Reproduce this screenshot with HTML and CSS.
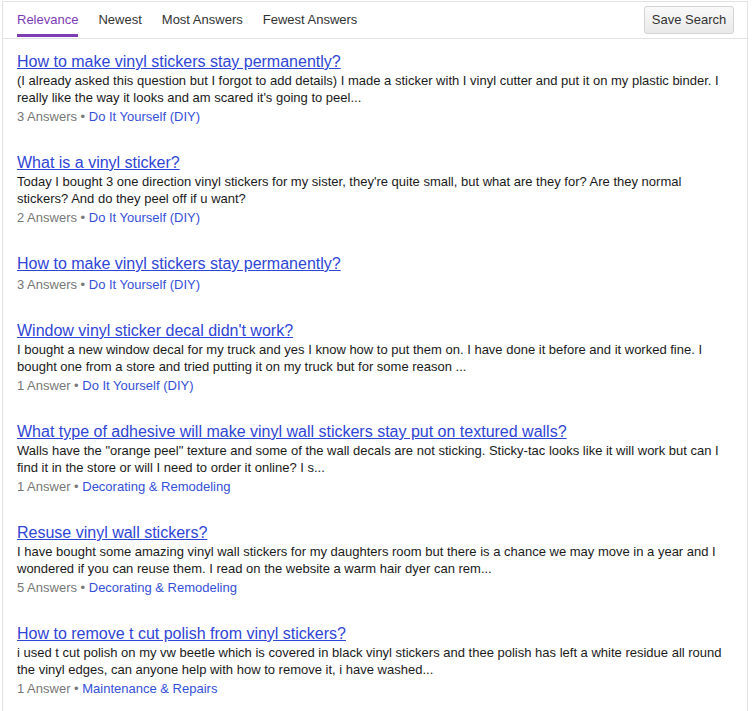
FILE: index.html
```html
<!DOCTYPE html>
<html>
<head>
<meta charset="utf-8">
<link rel="stylesheet" href="styles.css">
</head>
<body>
<div class="panel">
  <div class="header">
    <nav class="tabs">
      <a class="tab active">Relevance</a>
      <a class="tab">Newest</a>
      <a class="tab">Most Answers</a>
      <a class="tab">Fewest Answers</a>
    </nav>
    <button class="save">Save Search</button>
  </div>
  <ul class="results">
    <li class="item">
      <a class="title" href="#">How to make vinyl stickers stay permanently?</a>
      <p class="desc">(I already asked this question but I forgot to add details) I made a sticker with I vinyl cutter and put it on my plastic binder. I really like the way it looks and am scared it's going to peel...</p>
      <p class="meta">3 Answers • <a href="#">Do It Yourself (DIY)</a></p>
    </li>
    <li class="item">
      <a class="title" href="#">What is a vinyl sticker?</a>
      <p class="desc">Today I bought 3 one direction vinyl stickers for my sister, they're quite small, but what are they for? Are they normal stickers? And do they peel off if u want?</p>
      <p class="meta">2 Answers • <a href="#">Do It Yourself (DIY)</a></p>
    </li>
    <li class="item">
      <a class="title" href="#">How to make vinyl stickers stay permanently?</a>
      <p class="meta">3 Answers • <a href="#">Do It Yourself (DIY)</a></p>
    </li>
    <li class="item">
      <a class="title" href="#">Window vinyl sticker decal didn't work?</a>
      <p class="desc">I bought a new window decal for my truck and yes I know how to put them on. I have done it before and it worked fine. I bought one from a store and tried putting it on my truck but for some reason ...</p>
      <p class="meta">1 Answer • <a href="#">Do It Yourself (DIY)</a></p>
    </li>
    <li class="item">
      <a class="title" href="#">What type of adhesive will make vinyl wall stickers stay put on textured walls?</a>
      <p class="desc">Walls have the "orange peel" texture and some of the wall decals are not sticking. Sticky-tac looks like it will work but can I find it in the store or will I need to order it online? I s...</p>
      <p class="meta">1 Answer • <a href="#">Decorating &amp; Remodeling</a></p>
    </li>
    <li class="item">
      <a class="title" href="#">Resuse vinyl wall stickers?</a>
      <p class="desc">I have bought some amazing vinyl wall stickers for my daughters room but there is a chance we may move in a year and I wondered if you can reuse them. I read on the website a warm hair dyer can rem...</p>
      <p class="meta">5 Answers • <a href="#">Decorating &amp; Remodeling</a></p>
    </li>
    <li class="item">
      <a class="title" href="#">How to remove t cut polish from vinyl stickers?</a>
      <p class="desc">i used t cut polish on my vw beetle which is covered in black vinyl stickers and thee polish has left a white residue all round the vinyl edges, can anyone help with how to remove it, i have washed...</p>
      <p class="meta">1 Answer • <a href="#">Maintenance &amp; Repairs</a></p>
    </li>
  </ul>
</div>
</body>
</html>
```

FILE: styles.css
```css
html, body {
  margin: 0;
  padding: 0;
  background: #fff;
}
body {
  font-family: "Liberation Sans", Arial, sans-serif;
  color: #1a1a1a;
}
.panel {
  margin: 1px 0 0 2px;
  width: 746px;
  box-sizing: border-box;
  border: 1px solid #e2e2e2;
  border-bottom: none;
  min-height: 720px;
}
.header {
  display: flex;
  align-items: flex-start;
  justify-content: space-between;
  border-bottom: 1px solid #e2e2e2;
  padding: 0 13px 0 14px;
  height: 36px;
}
.tabs {
  display: flex;
  gap: 20px;
}
.tab {
  display: block;
  font-size: 13px;
  line-height: 16px;
  padding: 10px 0 6px;
  border-bottom: 3px solid transparent;
  color: #333;
  cursor: pointer;
}
.tab.active {
  color: #7d3db5;
  border-bottom-color: #7d3db5;
}
.save {
  margin-top: 4px;
  width: 90px;
  height: 28px;
  padding: 0 0 1px;
  font-family: "Liberation Sans", Arial, sans-serif;
  font-size: 13px;
  line-height: 16px;
  color: #333;
  background: linear-gradient(#f9f9f9, #e9e9e9);
  border: 1px solid #d3d3d3;
  border-radius: 3px;
}
.results {
  list-style: none;
  margin: 0;
  padding: 12px 14px 0;
  display: flex;
  flex-direction: column;
  gap: 27px;
}
.item {
  margin: 0;
}
.title {
  display: block;
  font-size: 16px;
  line-height: 21px;
  color: #2f45d6;
  text-decoration: underline;
}
.desc {
  margin: 0;
  font-size: 13px;
  line-height: 17px;
  color: #1a1a1a;
}
.meta {
  margin: 2px 0 0;
  font-size: 13px;
  line-height: 17px;
  color: #777;
}
.meta a {
  color: #3550d8;
  text-decoration: none;
}
```
